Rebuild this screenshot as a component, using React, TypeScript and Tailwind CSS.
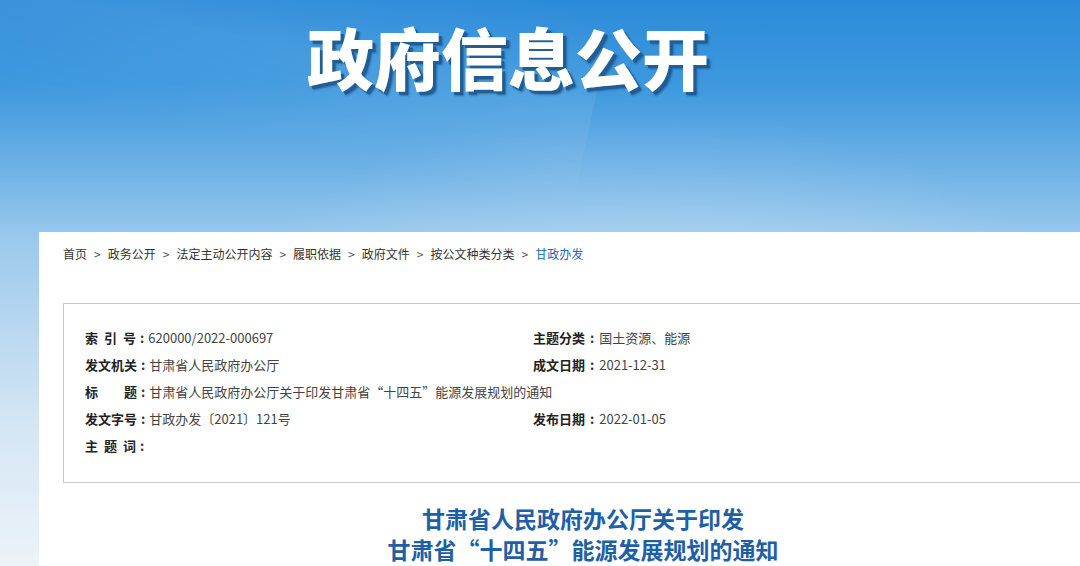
import React from "react";

const cjk = { fontFamily: '"Microsoft YaHei", "Noto Sans CJK SC", "Noto Sans", sans-serif' };

function Row({ label, value, right }: { label: React.ReactNode; value: React.ReactNode; right?: [React.ReactNode, React.ReactNode] }) {
  return (
    <div className="flex h-[27px] items-center text-[13px] text-[#333]">
      <div className="flex w-[448px] items-center whitespace-nowrap">
        <span className="font-bold text-[#222]">{label}</span>
        <span className="mx-[4px] font-bold">:</span>
        <span className="text-[#444]">{value}</span>
      </div>
      {right && (
        <div className="flex items-center whitespace-nowrap">
          <span className="font-bold text-[#222]">{right[0]}</span>
          <span className="mx-[5px] font-bold">:</span>
          <span className="text-[#444]">{right[1]}</span>
        </div>
      )}
    </div>
  );
}

function Spaced({ chars }: { chars: string[] }) {
  return (
    <span className="flex gap-[6px]">
      {chars.map((c, i) => (
        <span key={i}>{c}</span>
      ))}
    </span>
  );
}

export default function App() {
  const sep = <span className="mx-[7px] text-[#555]">&gt;</span>;
  return (
    <div
      className="relative h-[566px] w-[1080px] overflow-hidden bg-[linear-gradient(180deg,#2c8bd9_0%,#3d98de_15%,#6fb2e6_30%,#9ac9ec_42%,#b3d5ef_55%,#d4e6f4_75%,#ecf3f9_100%)]"
      style={cjk}
    >
      <div className="pointer-events-none absolute inset-0 bg-[radial-gradient(ellipse_at_60%_55%,rgba(255,255,255,0.25),rgba(255,255,255,0)_45%)]" />
      <div className="pointer-events-none absolute left-[-100px] top-[-60px] h-[200px] w-[700px] rotate-[12deg] bg-[linear-gradient(180deg,rgba(255,255,255,0),rgba(255,255,255,0.08),rgba(255,255,255,0))]" />

      <div className="relative flex h-[232px] items-start">
        <div className="ml-[307px] mt-[14px] text-[67px] font-black leading-[84px] text-white [text-shadow:3px_3px_0_#1f5d95,4px_4px_2px_rgba(20,60,100,0.5)]">
          政府信息公开
        </div>
      </div>

      <div className="relative ml-[39px] w-[1088px] bg-white px-[24px] pb-[40px] pt-[12px]">
        <div className="flex h-[20px] items-center text-[12px] text-[#333]">
          <span>首页</span>
          {sep}
          <span>政务公开</span>
          {sep}
          <span>法定主动公开内容</span>
          {sep}
          <span>履职依据</span>
          {sep}
          <span>政府文件</span>
          {sep}
          <span>按公文种类分类</span>
          {sep}
          <span className="text-[#2368b3]">甘政办发</span>
        </div>

        <div className="mt-[39px] border border-[#c9c9c9] pb-[23px] pl-[21px] pt-[20px]">
          <Row label={<Spaced chars={["索", "引", "号"]} />} value="620000/2022-000697" right={["主题分类", "国土资源、能源"]} />
          <Row label="发文机关" value="甘肃省人民政府办公厅" right={["成文日期", "2021-12-31"]} />
          <Row
            label={
              <span className="flex w-[52px] justify-between">
                <span>标</span>
                <span>题</span>
              </span>
            }
            value="甘肃省人民政府办公厅关于印发甘肃省“十四五”能源发展规划的通知"
          />
          <Row label="发文字号" value="甘政办发〔2021〕121号" right={["发布日期", "2022-01-05"]} />
          <Row label={<Spaced chars={["主", "题", "词"]} />} value="" />
        </div>

        <div className="mt-[20px] text-center text-[23px] font-bold leading-[31px] text-[#1e5fa6]">
          <div>甘肃省人民政府办公厅关于印发</div>
          <div>甘肃省“十四五”能源发展规划的通知</div>
        </div>
      </div>
    </div>
  );
}
